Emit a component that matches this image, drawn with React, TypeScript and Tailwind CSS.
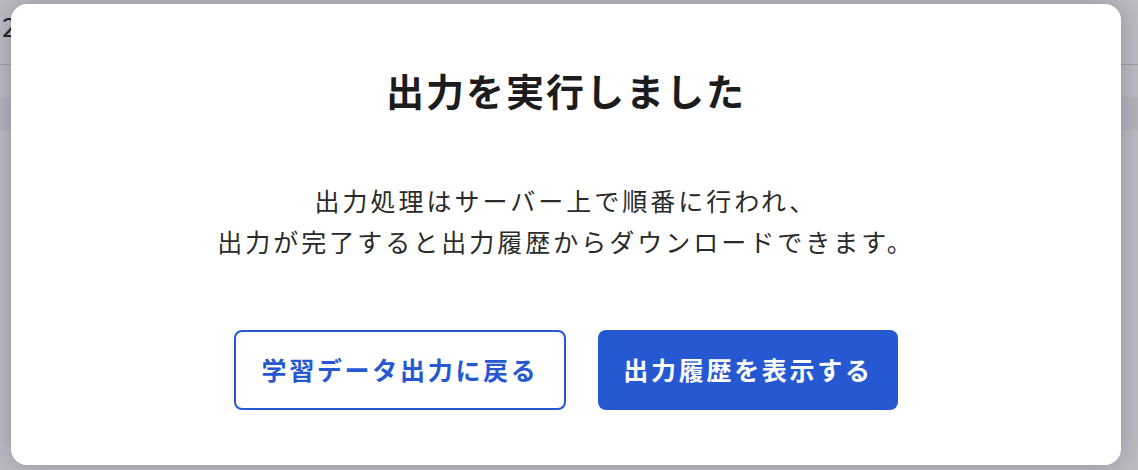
import React from 'react'

const font = { fontFamily: '"Noto Sans CJK JP", "Noto Sans", sans-serif' }

export default function App() {
  return (
    <div className="relative w-[1138px] h-[470px] overflow-hidden bg-white" style={font}>
      {/* page behind the dialog */}
      <div className="flex flex-col">
        <div className="h-[65px] border-b border-[#d8d8d8] flex items-start pt-[8px] pl-[2px]">
          <span className="text-[26px] text-[#222] leading-[36px]">2</span>
        </div>
        <div className="h-[32px]" />
        <div className="h-[33px] bg-[#f4f4f6]" />
      </div>

      {/* overlay */}
      <div className="absolute inset-0 bg-[rgba(40,38,60,0.3)] pt-[4px] pl-[11px]">
        <div className="w-[1110px] h-[461px] bg-white rounded-[16px] shadow-[0_0_28px_rgba(30,28,50,0.28)] flex flex-col items-center pt-[58px]">
          <h1 className="text-[38px] font-bold leading-[56px] tracking-[2px] text-[#1c1c1c]">
            出力を実行しました
          </h1>

          <p className="mt-[62px] text-[25px] leading-[41px] tracking-[3px] text-[#2a2a2a] text-center">
            出力処理はサーバー上で順番に行われ、
            <br />
            出力が完了すると出力履歴からダウンロードできます。
          </p>

          <div className="mt-[68px] flex gap-[32px]">
            <button className="w-[332px] h-[80px] rounded-[8px] border-2 border-[#2659d1] bg-white text-[#2659d1] text-[25px] font-bold tracking-[2.7px]">
              学習データ出力に戻る
            </button>
            <button className="w-[300px] h-[80px] rounded-[8px] bg-[#2659d1] text-white text-[25px] font-bold tracking-[2.7px]">
              出力履歴を表示する
            </button>
          </div>
        </div>
      </div>
    </div>
  )
}
